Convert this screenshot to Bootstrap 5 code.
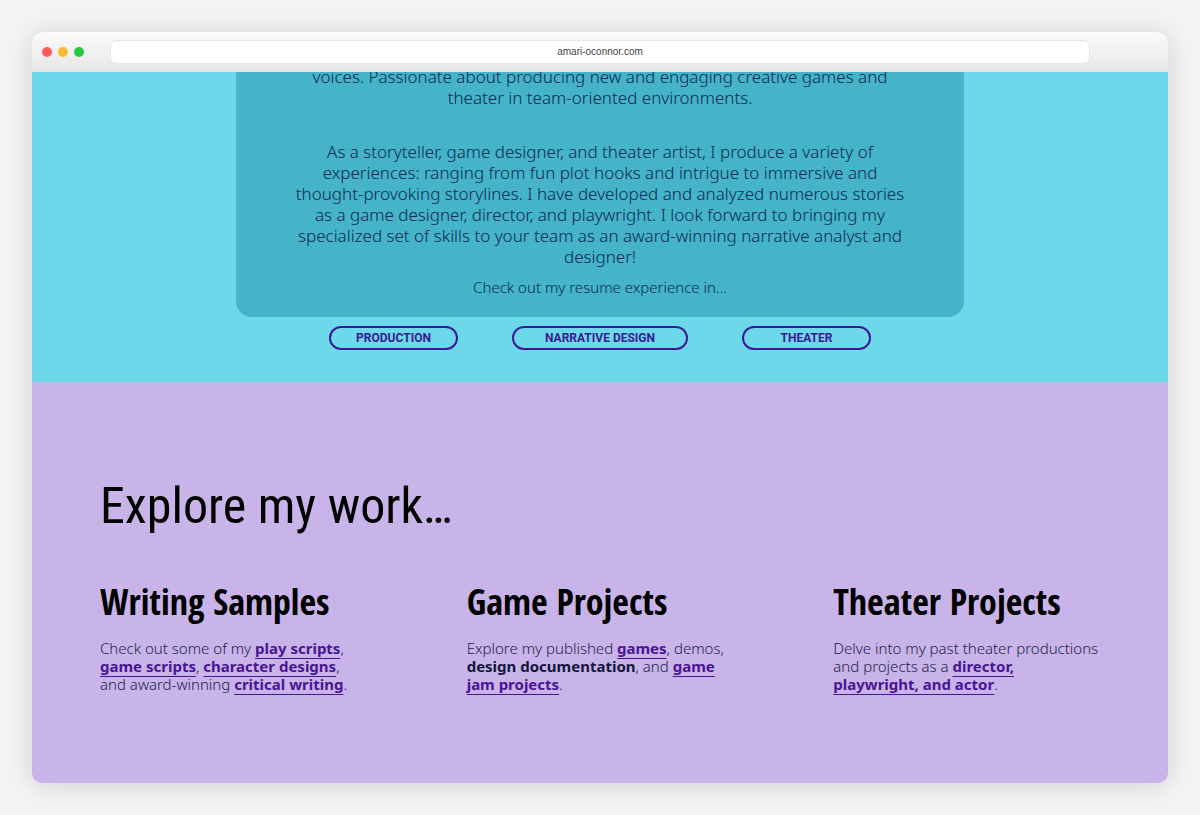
<!DOCTYPE html>
<html lang="en">
<head>
<meta charset="utf-8">
<meta name="viewport" content="width=device-width, initial-scale=1">
<title>Amari O'Connor</title>
<link href="https://cdn.jsdelivr.net/npm/bootstrap@5.3.0/dist/css/bootstrap.min.css" rel="stylesheet">
<style>
body { background: #f4f4f7; font-family: "Noto Sans", "Open Sans", sans-serif; font-weight: 300; color: #0c2a52; }
.browser { border-radius: 10px; box-shadow: 0 2px 28px rgba(0,0,0,.15); min-height: calc(100vh - 64px); background: #c8b4e8; }
.toolbar { height: 40px; padding: 0 10px; background: linear-gradient(#fbfbfb, #e6e6e6); }
.lights { width: 69px; gap: 6px; }
.light { width: 10px; height: 10px; border-radius: 50%; }
.address { height: 22px; margin-right: 69px; border-radius: 5px; border: 0; background: #fff; box-shadow: 0 0 0 1px #e6e6e6; font: 10px/22px "Liberation Sans", sans-serif; color: #444; text-align: center; min-width: 0; }
.hero { background: #6cd8ea; height: 310px; }
.panel { width: 64%; background: #45b3c8; border-radius: 0 0 16px 16px; padding-bottom: 19px; font-size: 17px; font-weight: 350; line-height: 21px; }
.scrolled { margin-top: -6px; margin-bottom: 33px; }
.story { margin-bottom: 10px; }
.hint { font-size: 15px; font-weight: 300; }
.pills { gap: 54px; margin-top: 9px; }
.pill { width: 129px; height: 24px; padding: 0; border: 2px solid #3a1a96; border-radius: 12px; background: transparent; color: #3a1a96; font: bold 12px/20px Roboto, sans-serif; }
.pill-wide { width: 176px; }
.work { padding: 92px 68px 88px; }
.display-title { font: 400 50px/64px "Roboto Condensed", "Open Sans Condensed", sans-serif; color: #000; margin-bottom: 42px; }
.topic { font: bold 36px/44px "Open Sans Condensed", "Roboto Condensed", sans-serif; color: #000; margin-bottom: 15px; }
.topics { --bs-gutter-x: 100px; }
.topics p { font-size: 15px; line-height: 18px; color: #241f4c; white-space: nowrap; }
.topics a { color: #4a1496; font-weight: 700; text-decoration: underline; text-decoration-thickness: 1px; text-underline-offset: 4px; text-decoration-skip-ink: none; }
.topics strong { color: #14163c; font-weight: 700; }
</style>
</head>
<body>
<div class="p-4"><div class="browser overflow-hidden m-2">
  <header class="toolbar d-flex align-items-center">
    <div class="lights d-flex flex-shrink-0">
      <span class="light" style="background:#fb5f57"></span><span class="light" style="background:#fdbc2e"></span><span class="light" style="background:#28c840"></span>
    </div>
    <input class="address flex-grow-1" type="text" value="amari-oconnor.com" aria-label="Address">
  </header>
  <main>
    <section class="hero overflow-hidden">
      <div class="panel mx-auto text-center">
        <p class="scrolled">voices. Passionate about producing new and engaging creative games and<br>theater in team-oriented environments.</p>
        <p class="story">As a storyteller, game designer, and theater artist, I produce a variety of<br>experiences: ranging from fun plot hooks and intrigue to immersive and<br>thought-provoking storylines. I have developed and analyzed numerous stories<br>as a game designer, director, and playwright. I look forward to bringing my<br>specialized set of skills to your team as an award-winning narrative analyst and<br>designer!</p>
        <p class="hint mb-0">Check out my resume experience in…</p>
      </div>
      <nav class="pills d-flex justify-content-center" aria-label="Resume">
        <button class="pill" type="button">PRODUCTION</button>
        <button class="pill pill-wide" type="button">NARRATIVE DESIGN</button>
        <button class="pill" type="button">THEATER</button>
      </nav>
    </section>
    <section class="work">
      <h1 class="display-title">Explore my work…</h1>
      <div class="row topics">
        <div class="col-4">
          <h2 class="topic text-nowrap">Writing Samples</h2>
          <p class="mb-0">Check out some of my <a href="#">play scripts</a>,<br><a href="#">game scripts</a>, <a href="#">character designs</a>,<br>and award-winning <a href="#">critical writing</a>.</p>
        </div>
        <div class="col-4">
          <h2 class="topic text-nowrap">Game Projects</h2>
          <p class="mb-0">Explore my published <a href="#">games</a>, demos,<br><strong>design documentation</strong>, and <a href="#">game<br>jam projects</a>.</p>
        </div>
        <div class="col-4">
          <h2 class="topic text-nowrap">Theater Projects</h2>
          <p class="mb-0">Delve into my past theater productions<br>and projects as a <a href="#">director,<br>playwright, and actor</a>.</p>
        </div>
      </div>
    </section>
  </main>
</div></div>
<script src="https://cdn.jsdelivr.net/npm/bootstrap@5.3.0/dist/js/bootstrap.bundle.min.js"></script>
</body>
</html>
